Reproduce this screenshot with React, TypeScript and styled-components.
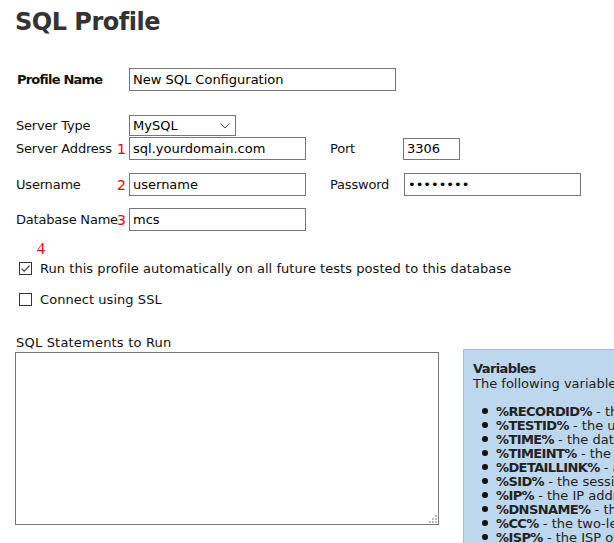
import React from "react";
import styled, { createGlobalStyle } from "styled-components";

const Global = createGlobalStyle`
  html, body { margin: 0; padding: 0; background: #fff; }
  body {
    font-family: "DejaVu Sans", Verdana, sans-serif;
    font-size: 13px;
    color: #111;
    overflow: hidden;
  }
`;

const Page = styled.div`
  width: 614px;
  height: 543px;
  overflow: hidden;
  padding: 8px 0 0 15px;
  box-sizing: border-box;
`;

const Title = styled.h1`
  margin: 0;
  font-size: 24px;
  font-weight: bold;
  letter-spacing: -0.5px;
  color: #333;
  line-height: 28px;
`;

const ProfileRow = styled.div`
  display: flex;
  align-items: center;
  margin-top: 32px;
`;

const ProfileLabel = styled.label`
  width: 114px;
  padding-left: 2px;
  box-sizing: border-box;
  font-weight: bold;
  letter-spacing: -0.8px;
`;

const TextBox = styled.input<{ $w: number; $h?: number }>`
  box-sizing: border-box;
  width: ${(p) => p.$w}px;
  height: ${(p) => p.$h ?? 23}px;
  border: 1px solid #777;
  border-radius: 0;
  padding: 0 3px;
  margin: 0;
  font-family: "DejaVu Sans", Verdana, sans-serif;
  font-size: 13px;
  color: #000;
  background: #fff;
  outline: none;
`;

const FormGrid = styled.div`
  display: grid;
  grid-template-columns: 102px 12px 177px 23px 74px auto;
  grid-template-rows: 23px 23px 13px 23px 12px 23px;
  align-items: center;
  margin-top: 23px;
`;

const FieldLabel = styled.label<{ $row: number; $col?: number }>`
  grid-row: ${(p) => p.$row};
  grid-column: ${(p) => p.$col ?? 1};
  white-space: nowrap;
  padding-left: 1px;
  letter-spacing: -0.2px;
`;

const Num = styled.span<{ $row: number }>`
  grid-row: ${(p) => p.$row};
  grid-column: 2;
  color: #e00;
  font-size: 14px;
  text-align: right;
  padding-right: 4px;
`;

const Cell = styled.div<{ $row: number; $col: number; $shift?: number }>`
  grid-row: ${(p) => p.$row};
  grid-column: ${(p) => p.$col};
  display: flex;
  align-items: center;
  padding-left: ${(p) => p.$shift ?? 0}px;
`;

const SelectWrap = styled.div`
  position: relative;
  width: 107px;
  height: 21px;
`;

const Select = styled.select`
  appearance: none;
  box-sizing: border-box;
  width: 100%;
  height: 100%;
  border: 1px solid #777;
  border-radius: 0;
  background: #fff;
  padding: 0 3px;
  font-family: "DejaVu Sans", Verdana, sans-serif;
  font-size: 13px;
  color: #000;
  outline: none;
`;

const Chevron = styled.svg`
  position: absolute;
  right: 6px;
  top: 8px;
  pointer-events: none;
`;

const Marker = styled.div`
  margin: 11px 0 0 22px;
  font-family: "Liberation Serif", serif;
  font-size: 16px;
  color: #e00;
  line-height: 14px;
`;

const CheckRow = styled.label<{ $gap: number }>`
  display: flex;
  align-items: center;
  gap: 8px;
  margin-top: ${(p) => p.$gap}px;
  padding-left: 4px;
  letter-spacing: 0.05px;
`;

const Box = styled.span`
  width: 13px;
  height: 13px;
  box-sizing: border-box;
  border: 1px solid #333;
  background: #fff;
  display: flex;
  align-items: center;
  justify-content: center;
`;

const Bottom = styled.div`
  display: flex;
  align-items: flex-start;
  margin-top: 28px;
`;

const SqlCol = styled.div`
  display: flex;
  flex-direction: column;
`;

const SqlLabel = styled.label`
  padding-left: 1px;
  line-height: 16px;
  height: 17px;
  letter-spacing: 0.2px;
`;

const AreaWrap = styled.div`
  position: relative;
  width: 424px;
  height: 173px;
`;

const SqlArea = styled.textarea`
  box-sizing: border-box;
  width: 100%;
  height: 100%;
  border: 1px solid #777;
  border-radius: 0;
  resize: none;
  margin: 0;
  outline: none;
  font-family: "DejaVu Sans Mono", monospace;
`;

const Grip = styled.svg`
  position: absolute;
  right: 2px;
  bottom: 2px;
  pointer-events: none;
`;

const VarPanel = styled.div`
  margin: 14px 0 0 24px;
  width: 170px;
  height: 200px;
  box-sizing: border-box;
  background: #bdd7ee;
  border-left: 1px solid #a9bfd3;
  border-top: 1px solid #a9bfd3;
  padding: 11px 0 0 9px;
  white-space: nowrap;
  overflow: hidden;
`;

const VarTitle = styled.div`
  font-weight: bold;
  letter-spacing: -0.6px;
  line-height: 15px;
  color: #222;
`;

const VarIntro = styled.div`
  line-height: 15px;
  color: #222;
`;

const VarList = styled.ul`
  margin: 14px 0 0;
  padding: 0 0 0 24px;
  list-style: none;
  color: #222;
  li {
    line-height: 14px;
    height: 14px;
  }
  li::before {
    content: "";
    display: inline-block;
    width: 6px;
    height: 6px;
    border-radius: 50%;
    background: #111;
    margin: 0 8px 0 -15px;
    vertical-align: 2px;
  }
  b {
    font-weight: bold;
    letter-spacing: -0.6px;
  }
`;

const variables = [
  ["%RECORDID%", "the record ID of the test"],
  ["%TESTID%", "the unique test ID"],
  ["%TIME%", "the date and time of the test"],
  ["%TIMEINT%", "the time as an integer"],
  ["%DETAILLINK%", "a link to the test details"],
  ["%SID%", "the session ID"],
  ["%IP%", "the IP address of the tester"],
  ["%DNSNAME%", "the DNS name of the tester"],
  ["%CC%", "the two-letter country code"],
  ["%ISP%", "the ISP of the tester"],
];

// resize grip: a small triangle of square dots
const gripDots = [
  [6, 0],
  [3, 3],
  [6, 3],
  [0, 6],
  [3, 6],
  [6, 6],
];

export default function App() {
  return (
    <>
      <Global />
      <Page>
        <Title>SQL Profile</Title>

        <ProfileRow>
          <ProfileLabel>Profile Name</ProfileLabel>
          <TextBox $w={267} defaultValue="New SQL Configuration" />
        </ProfileRow>

        <FormGrid>
          <FieldLabel $row={1}>Server Type</FieldLabel>
          <Cell $row={1} $col={3}>
            <SelectWrap>
              <Select defaultValue="MySQL">
                <option>MySQL</option>
                <option>MS SQL Server</option>
                <option>PostgreSQL</option>
              </Select>
              <Chevron width="10" height="6" viewBox="0 0 10 6">
                <path d="M0.5 0.5 L5 5 L9.5 0.5" fill="none" stroke="#555" strokeWidth="1" />
              </Chevron>
            </SelectWrap>
          </Cell>

          <FieldLabel $row={2}>Server Address</FieldLabel>
          <Num $row={2}>1</Num>
          <Cell $row={2} $col={3}>
            <TextBox $w={177} defaultValue="sql.yourdomain.com" />
          </Cell>
          <FieldLabel $row={2} $col={5}>Port</FieldLabel>
          <Cell $row={2} $col={6}>
            <TextBox $w={57} $h={22} defaultValue="3306" />
          </Cell>

          <FieldLabel $row={4}>Username</FieldLabel>
          <Num $row={4}>2</Num>
          <Cell $row={4} $col={3}>
            <TextBox $w={177} defaultValue="username" />
          </Cell>
          <FieldLabel $row={4} $col={5}>Password</FieldLabel>
          <Cell $row={4} $col={6} $shift={1}>
            <TextBox $w={177} type="password" defaultValue="password" />
          </Cell>

          <FieldLabel $row={6}>Database Name</FieldLabel>
          <Num $row={6}>3</Num>
          <Cell $row={6} $col={3}>
            <TextBox $w={177} defaultValue="mcs" />
          </Cell>
        </FormGrid>

        <Marker>4</Marker>
        <CheckRow $gap={5}>
          <Box>
            <svg width="11" height="11" viewBox="0 0 11 11">
              <path d="M1.5 5.5 L4.2 8.2 L9.5 2.5" fill="none" stroke="#555" strokeWidth="1.3" />
            </svg>
          </Box>
          Run this profile automatically on all future tests posted to this database
        </CheckRow>
        <CheckRow $gap={16}>
          <Box />
          Connect using SSL
        </CheckRow>

        <Bottom>
          <SqlCol>
            <SqlLabel>SQL Statements to Run</SqlLabel>
            <AreaWrap>
              <SqlArea />
              <Grip width="8" height="8" viewBox="0 0 8 8">
                {gripDots.map(([x, y]) => (
                  <rect key={`${x}-${y}`} x={x} y={y} width="2" height="2" fill="#bbb" />
                ))}
              </Grip>
            </AreaWrap>
          </SqlCol>
          <VarPanel>
            <VarTitle>Variables</VarTitle>
            <VarIntro>The following variables can be used in your SQL:</VarIntro>
            <VarList>
              {variables.map(([name, desc]) => (
                <li key={name}>
                  <b>{name}</b> - {desc}
                </li>
              ))}
            </VarList>
          </VarPanel>
        </Bottom>
      </Page>
    </>
  );
}
